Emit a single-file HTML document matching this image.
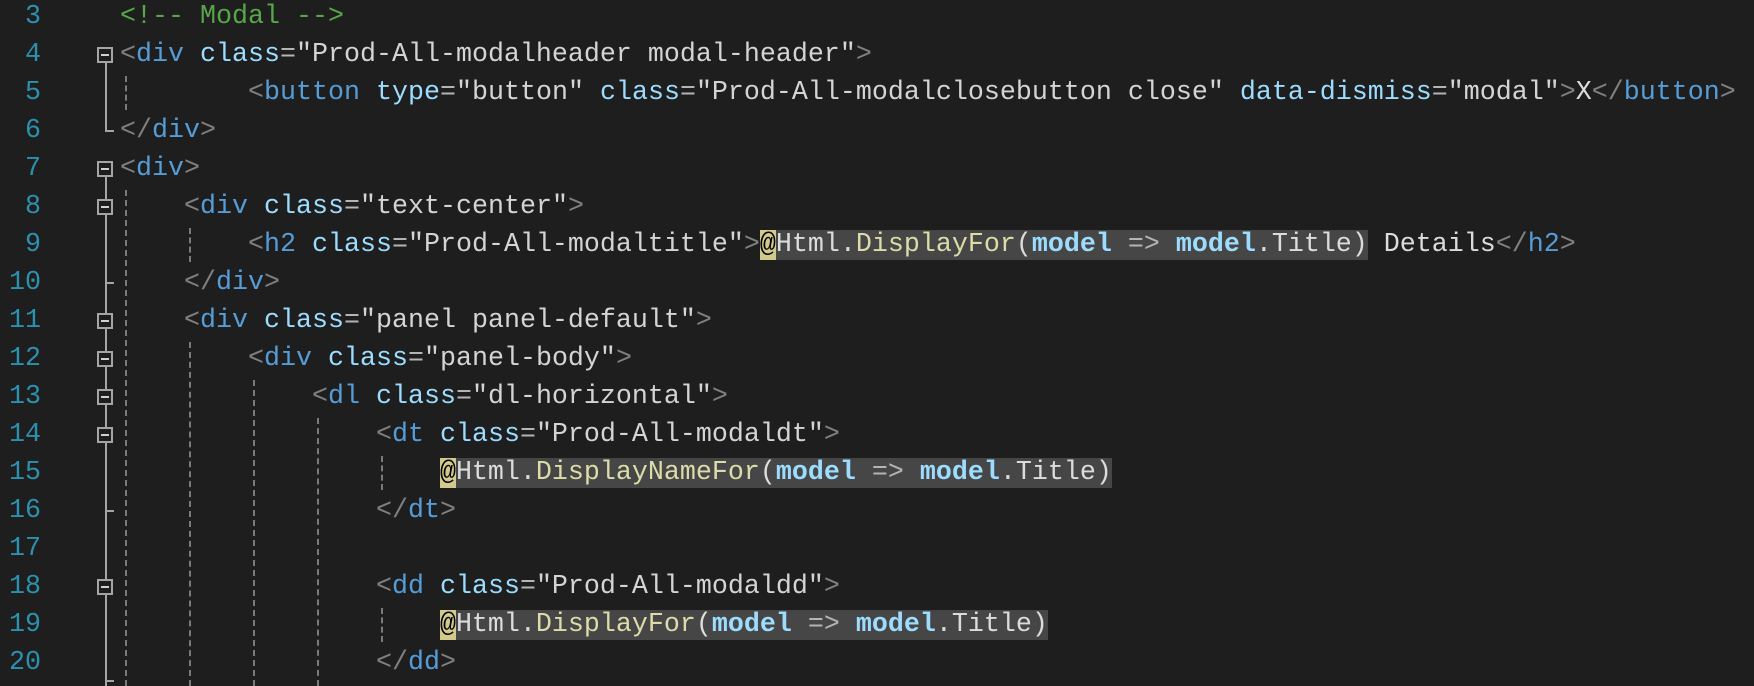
<!DOCTYPE html>
<html><head><meta charset="utf-8"><style>
html,body{margin:0;padding:0;background:#1e1e1e;width:1754px;height:686px;overflow:hidden;position:relative}
.l{position:absolute;left:120px;height:38px;line-height:38px;font-family:"Liberation Mono",monospace;font-size:26.67px;white-space:pre;color:#dcdcdc}
.n{position:absolute;left:0;width:41px;text-align:right;height:38px;line-height:38px;font-family:"Liberation Mono",monospace;font-size:26.67px;color:#2b91af}
.b{color:#808080}.t{color:#569cd6}.a{color:#9cdcfe}.e{color:#b4b4b4}.s{color:#d4d4d4}.c{color:#57a64a}
.m{color:#dcdcaa}.md{color:#9cdcfe;font-weight:bold}.hl{background:#464646}.at{background:#d2c98c;color:#000}
.g{position:absolute;width:0;border-left:2px dashed #7a7a7a}
.fb{position:absolute;left:97px;width:12px;height:12px;border:2px solid #a5a5a5;background:#1e1e1e}
.fb:after{content:"";position:absolute;left:2px;top:5px;width:8px;height:2px;background:#d0d0d0}
.fl{position:absolute;left:105px;width:2px;background:#a5a5a5}
.tk{position:absolute;left:105px;width:9px;height:2px;background:#a5a5a5}
</style></head><body>
<div class="n" style="top:-2px">3</div><div class="l" style="top:-2px"><span class="c">&lt;!-- Modal --&gt;</span></div>
<div class="n" style="top:36px">4</div><div class="l" style="top:36px"><span class="b">&lt;</span><span class="t">div</span> <span class="a">class</span><span class="e">=</span><span class="s">"Prod-All-modalheader modal-header"</span><span class="b">&gt;</span></div>
<div class="n" style="top:74px">5</div><div class="l" style="top:74px">        <span class="b">&lt;</span><span class="t">button</span> <span class="a">type</span><span class="e">=</span><span class="s">"button"</span> <span class="a">class</span><span class="e">=</span><span class="s">"Prod-All-modalclosebutton close"</span> <span class="a">data-dismiss</span><span class="e">=</span><span class="s">"modal"</span><span class="b">&gt;</span>X<span class="b">&lt;/</span><span class="t">button</span><span class="b">&gt;</span></div>
<div class="n" style="top:112px">6</div><div class="l" style="top:112px"><span class="b">&lt;/</span><span class="t">div</span><span class="b">&gt;</span></div>
<div class="n" style="top:150px">7</div><div class="l" style="top:150px"><span class="b">&lt;</span><span class="t">div</span><span class="b">&gt;</span></div>
<div class="n" style="top:188px">8</div><div class="l" style="top:188px">    <span class="b">&lt;</span><span class="t">div</span> <span class="a">class</span><span class="e">=</span><span class="s">"text-center"</span><span class="b">&gt;</span></div>
<div class="n" style="top:226px">9</div><div class="l" style="top:226px">        <span class="b">&lt;</span><span class="t">h2</span> <span class="a">class</span><span class="e">=</span><span class="s">"Prod-All-modaltitle"</span><span class="b">&gt;</span><span class="hl"><span class="at">@</span>Html.<span class="m">DisplayFor</span>(<span class="md">model</span> <span class="e">=&gt;</span> <span class="md">model</span>.Title)</span> Details<span class="b">&lt;/</span><span class="t">h2</span><span class="b">&gt;</span></div>
<div class="n" style="top:264px">10</div><div class="l" style="top:264px">    <span class="b">&lt;/</span><span class="t">div</span><span class="b">&gt;</span></div>
<div class="n" style="top:302px">11</div><div class="l" style="top:302px">    <span class="b">&lt;</span><span class="t">div</span> <span class="a">class</span><span class="e">=</span><span class="s">"panel panel-default"</span><span class="b">&gt;</span></div>
<div class="n" style="top:340px">12</div><div class="l" style="top:340px">        <span class="b">&lt;</span><span class="t">div</span> <span class="a">class</span><span class="e">=</span><span class="s">"panel-body"</span><span class="b">&gt;</span></div>
<div class="n" style="top:378px">13</div><div class="l" style="top:378px">            <span class="b">&lt;</span><span class="t">dl</span> <span class="a">class</span><span class="e">=</span><span class="s">"dl-horizontal"</span><span class="b">&gt;</span></div>
<div class="n" style="top:416px">14</div><div class="l" style="top:416px">                <span class="b">&lt;</span><span class="t">dt</span> <span class="a">class</span><span class="e">=</span><span class="s">"Prod-All-modaldt"</span><span class="b">&gt;</span></div>
<div class="n" style="top:454px">15</div><div class="l" style="top:454px">                    <span class="hl"><span class="at">@</span>Html.<span class="m">DisplayNameFor</span>(<span class="md">model</span> <span class="e">=&gt;</span> <span class="md">model</span>.Title)</span></div>
<div class="n" style="top:492px">16</div><div class="l" style="top:492px">                <span class="b">&lt;/</span><span class="t">dt</span><span class="b">&gt;</span></div>
<div class="n" style="top:530px">17</div>
<div class="n" style="top:568px">18</div><div class="l" style="top:568px">                <span class="b">&lt;</span><span class="t">dd</span> <span class="a">class</span><span class="e">=</span><span class="s">"Prod-All-modaldd"</span><span class="b">&gt;</span></div>
<div class="n" style="top:606px">19</div><div class="l" style="top:606px">                    <span class="hl"><span class="at">@</span>Html.<span class="m">DisplayFor</span>(<span class="md">model</span> <span class="e">=&gt;</span> <span class="md">model</span>.Title)</span></div>
<div class="n" style="top:644px">20</div><div class="l" style="top:644px">                <span class="b">&lt;/</span><span class="t">dd</span><span class="b">&gt;</span></div>

<div class="g" style="left:125px;top:76px;height:34px"></div>
<div class="g" style="left:125px;top:190px;height:496px"></div>
<div class="g" style="left:189px;top:228px;height:34px"></div>
<div class="g" style="left:189px;top:342px;height:344px"></div>
<div class="g" style="left:253px;top:380px;height:306px"></div>
<div class="g" style="left:317px;top:418px;height:268px"></div>
<div class="g" style="left:381px;top:456px;height:34px"></div>
<div class="g" style="left:381px;top:608px;height:34px"></div>

<div class="fl" style="top:62px;height:70px"></div><div class="tk" style="top:130px"></div>
<div class="fl" style="top:176px;height:510px"></div>
<div class="tk" style="top:282px"></div>
<div class="tk" style="top:510px"></div>
<div class="tk" style="top:680px"></div>
<div class="fb" style="top:47px"></div>
<div class="fb" style="top:161px"></div>
<div class="fb" style="top:199px"></div>
<div class="fb" style="top:313px"></div>
<div class="fb" style="top:351px"></div>
<div class="fb" style="top:389px"></div>
<div class="fb" style="top:427px"></div>
<div class="fb" style="top:579px"></div>
</body></html>
